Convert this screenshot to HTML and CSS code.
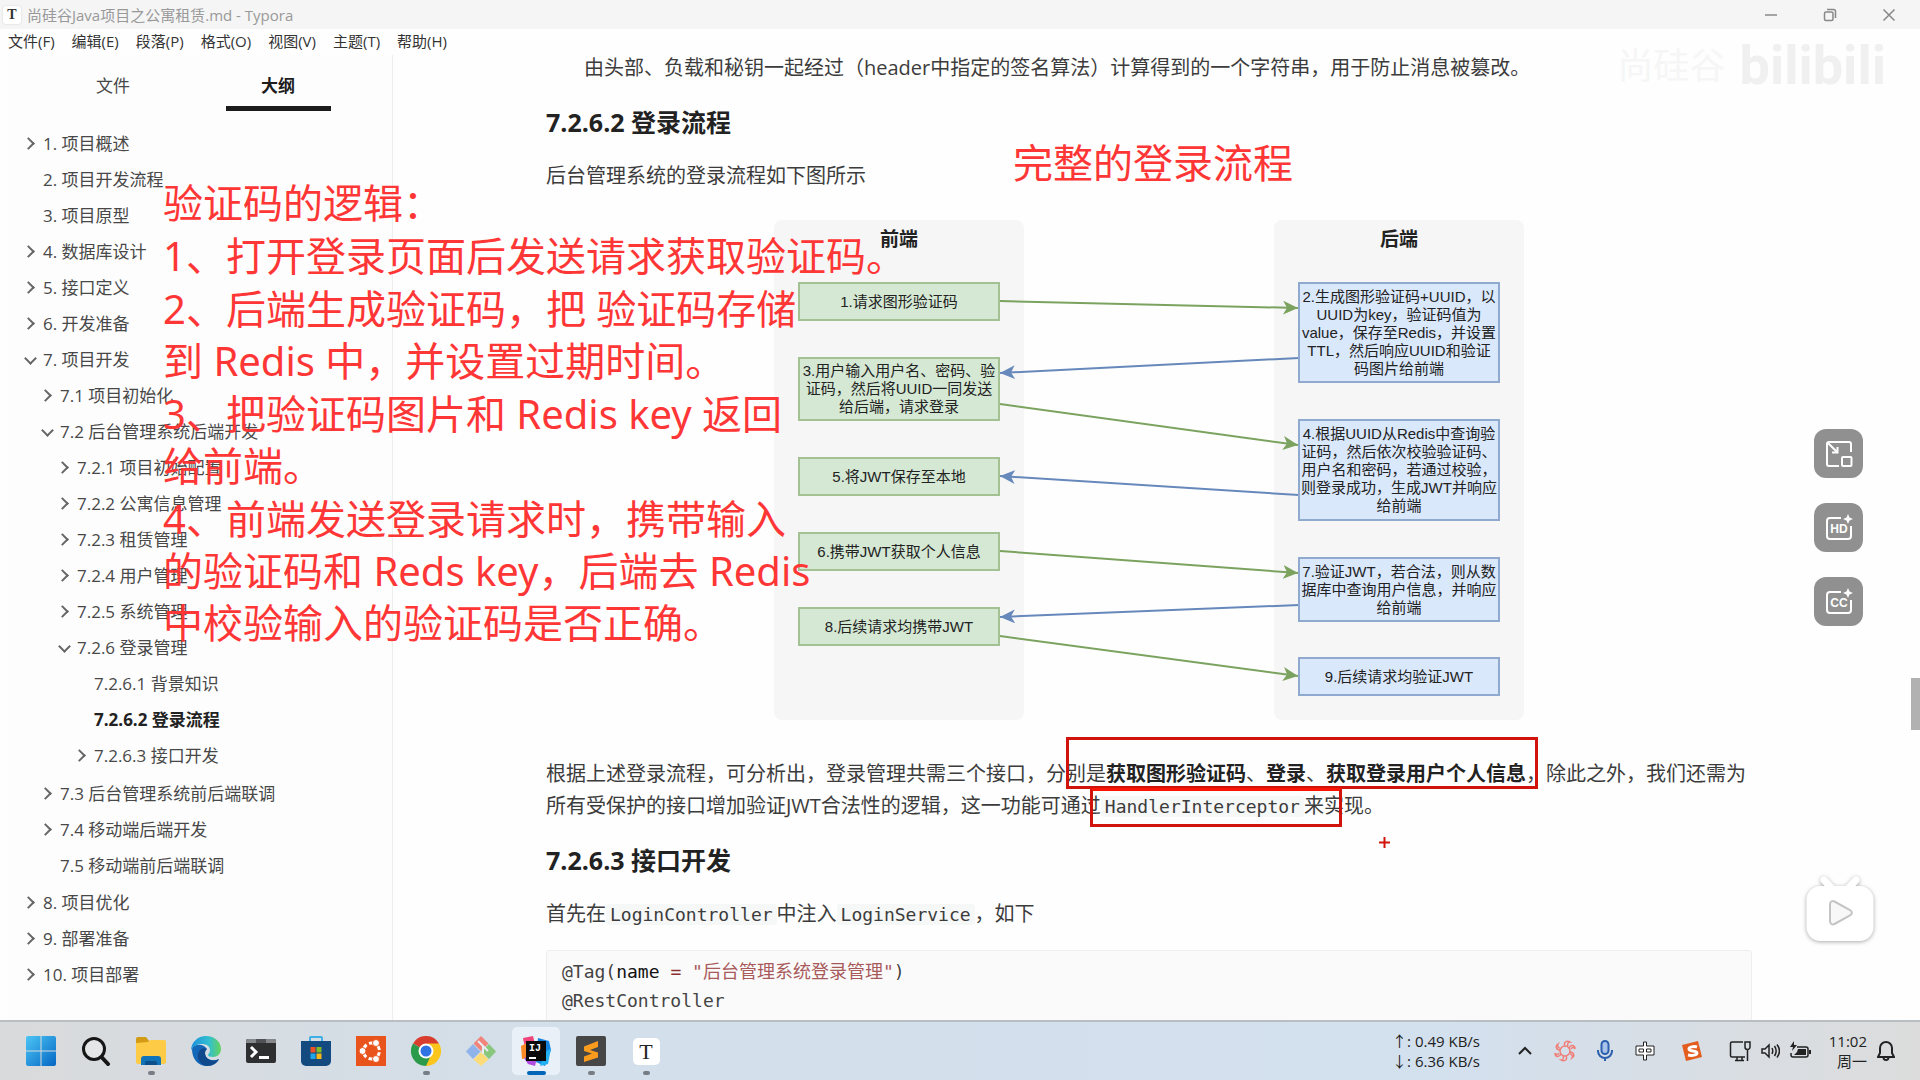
FILE: index.html
```html
<!DOCTYPE html>
<html lang="zh-CN">
<head>
    <meta charset="UTF-8">
    <meta name="viewport" content="width=device-width, initial-scale=1.0">
    <title>尚硅谷Java项目之公寓租赁.md - Typora</title>
    <link rel="stylesheet" href="styles.css">
</head>
<body>
    <header class="titlebar">
        <span class="app-icon">T</span>
        <span class="app-title">尚硅谷Java项目之公寓租赁.md - Typora</span>
        <div class="window-buttons">
            <button aria-label="最小化"><svg width="14" height="14" viewBox="0 0 14 14"><path d="M1 7h12"/></svg></button>
            <button aria-label="还原"><svg width="14" height="14" viewBox="0 0 14 14"><rect x="1.5" y="4" width="8.500" height="8.500" rx="1.500"/><path d="M4 1.500h6.500a2 2 0 0 1 2 2V10"/></svg></button>
            <button aria-label="关闭"><svg width="14" height="14" viewBox="0 0 14 14"><path d="M1.500 1.500l11 11M12.500 1.500l-11 11"/></svg></button>
        </div>
    </header>

    <nav class="menubar">
        <button>文件(F)</button>
        <button>编辑(E)</button>
        <button>段落(P)</button>
        <button>格式(O)</button>
        <button>视图(V)</button>
        <button>主题(T)</button>
        <button>帮助(H)</button>
    </nav>

    <div class="workspace">
        <aside class="sidebar">
            <div class="tabs">
                <button class="tab">文件</button>
                <button class="tab active">大纲</button>
            </div>
            <ul class="outline">
                <li><div class="row"><button class="toggle" aria-label="展开"></button><a href="#">1. 项目概述</a></div></li>
                <li><div class="row leaf"><a href="#">2. 项目开发流程</a></div></li>
                <li><div class="row leaf"><a href="#">3. 项目原型</a></div></li>
                <li><div class="row"><button class="toggle" aria-label="展开"></button><a href="#">4. 数据库设计</a></div></li>
                <li><div class="row"><button class="toggle" aria-label="展开"></button><a href="#">5. 接口定义</a></div></li>
                <li><div class="row"><button class="toggle" aria-label="展开"></button><a href="#">6. 开发准备</a></div></li>
                <li><div class="row"><button class="toggle open" aria-label="折叠"></button><a href="#">7. 项目开发</a></div>
                    <ul>
                        <li><div class="row"><button class="toggle" aria-label="展开"></button><a href="#">7.1 项目初始化</a></div></li>
                        <li><div class="row"><button class="toggle open" aria-label="折叠"></button><a href="#">7.2 后台管理系统后端开发</a></div>
                            <ul>
                                <li><div class="row"><button class="toggle" aria-label="展开"></button><a href="#">7.2.1 项目初始配置</a></div></li>
                                <li><div class="row"><button class="toggle" aria-label="展开"></button><a href="#">7.2.2 公寓信息管理</a></div></li>
                                <li><div class="row"><button class="toggle" aria-label="展开"></button><a href="#">7.2.3 租赁管理</a></div></li>
                                <li><div class="row"><button class="toggle" aria-label="展开"></button><a href="#">7.2.4 用户管理</a></div></li>
                                <li><div class="row"><button class="toggle" aria-label="展开"></button><a href="#">7.2.5 系统管理</a></div></li>
                                <li><div class="row"><button class="toggle open" aria-label="折叠"></button><a href="#">7.2.6 登录管理</a></div>
                                    <ul>
                                        <li><div class="row leaf"><a href="#">7.2.6.1 背景知识</a></div></li>
                                        <li><div class="row leaf current"><a href="#login-flow">7.2.6.2 登录流程</a></div></li>
                                        <li><div class="row"><button class="toggle" aria-label="展开"></button><a href="#api-dev">7.2.6.3 接口开发</a></div></li>
                                    </ul>
                                </li>
                            </ul>
                        </li>
                        <li><div class="row"><button class="toggle" aria-label="展开"></button><a href="#">7.3 后台管理系统前后端联调</a></div></li>
                        <li><div class="row"><button class="toggle" aria-label="展开"></button><a href="#">7.4 移动端后端开发</a></div></li>
                        <li><div class="row leaf"><a href="#">7.5 移动端前后端联调</a></div></li>
                    </ul>
                </li>
                <li><div class="row"><button class="toggle" aria-label="展开"></button><a href="#">8. 项目优化</a></div></li>
                <li><div class="row"><button class="toggle" aria-label="展开"></button><a href="#">9. 部署准备</a></div></li>
                <li><div class="row"><button class="toggle" aria-label="展开"></button><a href="#">10. 项目部署</a></div></li>
            </ul>
        </aside>

        <main class="editor">
            <article>
                <p class="indent">由头部、负载和秘钥一起经过（header中指定的签名算法）计算得到的一个字符串，用于防止消息被篡改。</p>
                <h4 id="login-flow">7.2.6.2 登录流程</h4>
                <p>后台管理系统的登录流程如下图所示</p>

                <figure class="flow">
                    <div class="lane lane-front">前端</div>
                    <div class="lane lane-back">后端</div>
                    <svg class="arrows" width="750" height="500" viewBox="0 0 750 500">
                        <defs>
                            <marker id="headGreen" markerUnits="userSpaceOnUse" markerWidth="15" markerHeight="14" refX="15" refY="7" orient="auto"><path d="M15 7L0 14L4 7L0 0z" fill="#7ba35f"/></marker>
                            <marker id="headBlue" markerUnits="userSpaceOnUse" markerWidth="15" markerHeight="14" refX="15" refY="7" orient="auto"><path d="M15 7L0 14L4 7L0 0z" fill="#6688bb"/></marker>
                        </defs>
                        <g class="to-back">
                            <path d="M226 81L524 88"/>
                            <path d="M226 184L524 225"/>
                            <path d="M226 331L524 353"/>
                            <path d="M226 416L524 456"/>
                        </g>
                        <g class="to-front">
                            <path d="M525 138L226 153"/>
                            <path d="M525 275L226 256"/>
                            <path d="M525 385L226 397"/>
                        </g>
                    </svg>
                    <div class="node front n1">1.请求图形验证码</div>
                    <div class="node back n2">2.生成图形验证码+UUID，以<br>UUID为key，验证码值为<br>value，保存至Redis，并设置<br>TTL，然后响应UUID和验证<br>码图片给前端</div>
                    <div class="node front n3">3.用户输入用户名、密码、验<br>证码，然后将UUID一同发送<br>给后端，请求登录</div>
                    <div class="node back n4">4.根据UUID从Redis中查询验<br>证码，然后依次校验验证码、<br>用户名和密码，若通过校验，<br>则登录成功，生成JWT并响应<br>给前端</div>
                    <div class="node front n5">5.将JWT保存至本地</div>
                    <div class="node front n6">6.携带JWT获取个人信息</div>
                    <div class="node back n7">7.验证JWT，若合法，则从数<br>据库中查询用户信息，并响应<br>给前端</div>
                    <div class="node front n8">8.后续请求均携带JWT</div>
                    <div class="node back n9">9.后续请求均验证JWT</div>
                </figure>

                <div class="marked">
                    <p>根据上述登录流程，可分析出，登录管理共需三个接口，分别是<strong>获取图形验证码</strong>、<strong>登录</strong>、<strong>获取登录用户个人信息</strong>，除此之外，我们还需为所有受保护的接口增加验证JWT合法性的逻辑，这一功能可通过<code>HandlerInterceptor</code>来实现。</p>
                    <span class="mark mark-apis"></span>
                    <span class="mark mark-interceptor"></span>
                    <svg class="cursor" width="11" height="11" viewBox="0 0 11 11"><path d="M5.500 0v11M0 5.500h11"/></svg>
                </div>

                <h4 id="api-dev">7.2.6.3 接口开发</h4>
                <p>首先在<code>LoginController</code>中注入<code>LoginService</code>，如下</p>
                <pre>@Tag(<span class="attr">name</span> <span class="op">=</span> <span class="str">"后台管理系统登录管理"</span>)
@RestController</pre>
            </article>
            <div class="scroll-thumb"></div>
        </main>
    </div>

    <!-- notes laid over the document -->
    <div class="note note-logic">
        <p>验证码的逻辑：</p>
        <p>1、打开登录页面后发送请求获取验证码。</p>
        <p>2、后端生成验证码，把 验证码存储<br>到 Redis 中，并设置过期时间。</p>
        <p>3、把验证码图片和 Redis key 返回<br>给前端。</p>
        <p>4、前端发送登录请求时，携带输入<br>的验证码和 Reds key，后端去 Redis<br>中校验输入的验证码是否正确。</p>
    </div>
    <div class="note note-flow">完整的登录流程</div>

    <div class="watermark"><span class="author">尚硅谷</span><span class="brand">bilibili</span></div>

    <!-- player buttons -->
    <div class="player-tools">
        <button class="tool" aria-label="小窗">
            <svg width="28" height="28" viewBox="0 0 28 28"><path d="M26 12V4a2 2 0 0 0-2-2H4a2 2 0 0 0-2 2v20a2 2 0 0 0 2 2h10"/><path d="M3 3l9 9M12.500 7v5.500H7"/><rect x="17" y="17" width="9.500" height="9" rx="1"/></svg>
        </button>
        <button class="tool" aria-label="HD">
            <svg width="28" height="28" viewBox="0 0 28 28"><path d="M16 4H5a3 3 0 0 0-3 3v15a3 3 0 0 0 3 3h18a3 3 0 0 0 3-3V12"/><path class="fill" d="M23 0l1.500 3.500L28 5l-3.500 1.500L23 10l-1.500-3.500L18 5l3.500-1.500z"/><text x="14" y="19">HD</text></svg>
        </button>
        <button class="tool" aria-label="CC">
            <svg width="28" height="28" viewBox="0 0 28 28"><path d="M16 4H5a3 3 0 0 0-3 3v15a3 3 0 0 0 3 3h18a3 3 0 0 0 3-3V12"/><path class="fill" d="M23 0l1.500 3.500L28 5l-3.500 1.500L23 10l-1.500-3.500L18 5l3.500-1.500z"/><text x="14" y="19">CC</text></svg>
        </button>
    </div>
    <button class="tv" aria-label="播放">
        <svg width="80" height="78" viewBox="0 0 80 78">
            <path class="body" d="M21.500 8.500a3.500 3.500 0 0 1 5 0l8 8.500h11l8-8.500a3.500 3.500 0 0 1 5 5l-3 3.500h4a14 14 0 0 1 14 14v27a14 14 0 0 1-14 14h-39a14 14 0 0 1-14-14V31a14 14 0 0 1 14-14h4l-3-3.500a3.500 3.500 0 0 1 0-5z"/>
            <path class="play" d="M30 35.500c0-3 2-4 4.500-3l15.500 8.500c2.500 1.500 2.500 4 0 5.500L34.500 55c-2.500 1-4.500 0-4.500-3z"/>
        </svg>
    </button>

    <footer class="taskbar">
        <div class="apps">
            <button aria-label="开始"><svg width="30" height="30" viewBox="0 0 30 30"><defs><linearGradient id="win" x2="1" y2="1"><stop stop-color="#4cc6f5"/><stop offset="1" stop-color="#0566c4"/></linearGradient></defs><path fill="url(#win)" d="M2 0h12.500v14.500H0V2a2 2 0 0 1 2-2zM15.500 0H28a2 2 0 0 1 2 2v12.500H15.500zM0 15.500h14.500V30H2a2 2 0 0 1-2-2zM15.500 15.500H30V28a2 2 0 0 1-2 2H15.500z"/></svg></button>
            <button aria-label="搜索"><svg width="30" height="30" viewBox="0 0 30 30"><circle cx="13" cy="13" r="10.500" fill="#e4e6e8" stroke="#161616" stroke-width="3"/><path d="M20.500 21l6.500 7" stroke="#161616" stroke-width="4" stroke-linecap="round"/></svg></button>
            <button class="running" aria-label="文件资源管理器"><svg width="32" height="30" viewBox="0 0 32 30"><path fill="#d39a13" d="M1 3a2 2 0 0 1 2-2h8l3 4v6H1z"/><path fill="#fdcb45" d="M1 7l12-1 2-2h14a2 2 0 0 1 2 2v20a2 2 0 0 1-2 2H3a2 2 0 0 1-2-2z"/><path fill="#1173b8" d="M6 29v-6a3 3 0 0 1 3-3h14a3 3 0 0 1 3 3v6z"/><path fill="#0b4f8b" d="M10 29v-2a2 2 0 0 1 2-2h8a2 2 0 0 1 2 2v2z"/></svg></button>
            <button aria-label="Edge"><svg width="30" height="30" viewBox="0 0 30 30"><defs><linearGradient id="edge" x2="1"><stop stop-color="#1b8fdc"/><stop offset=".6" stop-color="#33bfd0"/><stop offset="1" stop-color="#66d35c"/></linearGradient></defs><path fill="#1267b8" d="M1 13c0 10 6 17 15 17 6 0 10-3 12-7-7 3-14 0-14-6 0-3 2-4 2-4-3-5-13-6-15 0z"/><path fill="url(#edge)" d="M0 15C0 6 7 0 15 0c9 0 15 6 15 13 0 5-4 8-8 8-3 0-5-1-5-2s2-2 2-5c0-4-4-6-8-6-6 0-10 3-11 7z"/><path fill="#104a8c" d="M9 14c-5 6-1 15 7 16 6 0 10-3 12-7-7 4-14 0-14-6 0-3 2-4 2-4-3-1-5-1-7 1z"/></svg></button>
            <button aria-label="终端"><svg width="30" height="24" viewBox="0 0 30 24"><rect width="30" height="24" rx="2" fill="#2e2f31"/><path fill="#85888b" d="M2 0h26a2 2 0 0 1 2 2v2H0V2a2 2 0 0 1 2-2z"/><path fill="#505255" d="M10 0h10v4H10z"/><path d="M5 8l5 5-5 5" fill="none" stroke="#fff" stroke-width="3"/><path d="M13 18.500h10" stroke="#fff" stroke-width="3"/></svg></button>
            <button aria-label="应用商店"><svg width="30" height="30" viewBox="0 0 30 30"><path d="M9 6V2a1 1 0 0 1 1-1h10a1 1 0 0 1 1 1v4" fill="none" stroke="#3fb0e6" stroke-width="2"/><path fill="#134a80" d="M0 5h30v20a5 5 0 0 1-5 5H5a5 5 0 0 1-5-5z"/><path fill="#ef5027" d="M9.500 11h5v5.500h-5z"/><path fill="#83bb23" d="M15.500 11h5v5.500h-5z"/><path fill="#23a5ea" d="M9.500 17.500h5V23h-5z"/><path fill="#fbb919" d="M15.500 17.500h5V23h-5z"/></svg></button>
            <button aria-label="Ubuntu"><svg width="30" height="30" viewBox="0 0 30 30"><path fill="#e8541c" d="M0 0h30v30H0z"/><circle cx="15.500" cy="15" r="8" fill="none" stroke="#fff" stroke-width="3" stroke-dasharray="14 2.750" stroke-dashoffset="-1.400"/><g fill="#fff" stroke="#e8541c"><circle cx="6.500" cy="15" r="3.500"/><circle cx="20" cy="7" r="3.500"/><circle cx="20" cy="23" r="3.500"/></g></svg></button>
            <button class="running" aria-label="Chrome"><svg width="30" height="30" viewBox="0 0 30 30"><path fill="#d93d2e" d="M15 15L2 7.500a15 15 0 0 1 26 0z"/><path fill="#fbc61c" d="M15 15l2-7.500h11A15 15 0 0 1 15 30z"/><path fill="#2c9a4b" d="M15 15l5 4-5 11A15 15 0 0 1 2 7.500z"/><circle cx="15" cy="15" r="7.500" fill="#fff"/><circle cx="15" cy="15" r="5.500" fill="#2f72e4"/></svg></button>
            <button aria-label="Git"><svg width="30" height="30" viewBox="0 0 30 30"><path fill="#f0847a" d="M15 0l7.500 7.500L15 15 7.500 7.500z"/><path fill="#8fb3ea" d="M7 8l7.500 7.500L7 23l-7-7.500z"/><path fill="#88c77c" d="M23 8l7 7.500-7 7.500-7.500-7.500z"/><path fill="#fbdc78" d="M15 16l7.500 7.500L15 30l-7.500-6.500z"/><path d="M12 5l5 5v8M17 10l5 5" fill="none" stroke="#e6edf3" stroke-width="2"/></svg></button>
            <button class="running active" aria-label="IntelliJ IDEA"><svg width="32" height="32" viewBox="0 0 32 32"><path fill="#f0457a" d="M3 3l10-2 3 12-9 10z"/><path fill="#f98a26" d="M1 11l8-4 3 15-10 2z"/><path fill="#1683e0" d="M18 3l11 3 2 9-6 16-9-4z"/><path fill="#b14be0" d="M4 23l14-4-3 12-7-2z"/><path fill="#22b0f2" d="M24 18l7-5-3 16-8 2z"/><path fill="#0a0a0a" d="M6 6h20v20H6z"/><text x="9" y="16" class="ij">IJ</text><path fill="#fff" d="M9 22h7v2H9z"/></svg></button>
            <button class="running" aria-label="Sublime Text"><svg width="30" height="30" viewBox="0 0 30 30"><rect width="30" height="30" rx="2" fill="#464646"/><path fill="#fb9b1e" d="M8 10.500L22 5v6l-8 3 8 2.500v5L8 26v-5.500l8-3-8-2.500z"/></svg></button>
            <button class="running" aria-label="Typora"><span class="typora">T</span></button>
        </div>

        <div class="tray">
            <div class="network">↑: 0.49 KB/s<br>↓: 6.36 KB/s</div>
            <button class="slot" aria-label="显示隐藏的图标"><svg width="16" height="16" viewBox="0 0 16 16"><path d="M2 11l6-6 6 6"/></svg></button>
            <button class="slot" aria-label="云服务"><svg class="flower" width="22" height="22" viewBox="0 0 22 22"><path d="M11 6c-2-4 2-6 5-4-2 0-3 2-2 4"/><path d="M15 8c2-4 6-3 6 1-1-2-3-2-4 0"/><path d="M16 12c4 0 5 4 2 6 1-2 0-4-2-4"/><path d="M12 16c2 4-2 6-5 4 2 0 3-2 2-4"/><path d="M7 14c-2 4-6 3-6-1 1 2 3 2 4 0"/><path d="M6 10C2 10 1 6 4 4c-1 2 0 4 2 4"/><circle cx="11" cy="11" r="5"/></svg></button>
            <button class="slot" aria-label="麦克风"><svg class="mic" width="20" height="22" viewBox="0 0 20 22"><rect x="6.500" y="1" width="7" height="13" rx="3.500"/><path d="M3 10v1a7 7 0 0 0 14 0v-1M10 18v3"/></svg></button>
            <button class="slot ime" aria-label="输入法"><svg width="20" height="20" viewBox="0 0 20 20"><path d="M8.500 1h3v4H19v9h-7.500v5h-3v-5H1V5h7.500z"/><path d="M4 8h4.500v3H4zM11.500 8H16v3h-4.500z"/></svg></button>
            <button class="slot sogou" aria-label="搜狗输入法"><svg width="20" height="20" viewBox="0 0 20 20"><path fill="#e25d1e" stroke="none" d="M0 4L16 0l4 16L4 20z"/><path d="M15 6c-3-1-8 0-8 2 0 3 8 1 8 4 0 2-5 3-9 2" stroke="#fff" stroke-width="3"/></svg></button>
            <div class="quick">
                <svg width="22" height="22" viewBox="0 0 22 22"><path d="M14 2H3a1.500 1.500 0 0 0-1.500 1.500v12A1.500 1.500 0 0 0 3 17h13M6 20.500h9M8 17v3M13 17v3M18.500 9v12M16 2h5v5a2 2 0 0 1-5 0z"/></svg>
                <svg width="20" height="20" viewBox="0 0 20 20"><path d="M2 8v4h3l4 4V4L5 8zM12 7c1 2 1 4 0 6M14.500 5c2 3 2 7 0 10M17 3.500c3 4 3 9 0 13"/></svg>
                <svg width="22" height="20" viewBox="0 0 22 20"><path d="M8 6h9a2 2 0 0 1 2 2v6a2 2 0 0 1-2 2H4a2 2 0 0 1-2-2v-2"/><path class="solid" d="M9 8h8v6H5l3-3zM20 9h2v4h-2zM5 0L1 6h3l-1 4 5-6H5z"/></svg>
            </div>
            <div class="clock">11:02<br>周一</div>
            <button class="slot bell" aria-label="通知"><svg width="18" height="20" viewBox="0 0 18 20"><path d="M9 1a6 6 0 0 0-6 6v5l-2 4h16l-2-4V7a6 6 0 0 0-6-6zM6.500 16.500a2.500 2.500 0 0 0 5 0"/></svg></button>
        </div>
    </footer>
</body>
</html>
```

FILE: styles.css
```css
* {
    margin: 0;
    padding: 0;
    box-sizing: border-box;
}

body {
    display: flex;
    flex-direction: column;
    height: 100vh;
    overflow: hidden;
    position: relative;
    background: #fefefe;
    font-family: "Open Sans", "Noto Sans CJK SC", sans-serif;
    color: #3c3c3c;
}

button {
    border: none;
    background: none;
    font: inherit;
    color: inherit;
    cursor: pointer;
}

a {
    color: inherit;
    text-decoration: none;
}

svg {
    display: block;
}

/* title bar */
.titlebar {
    display: flex;
    align-items: center;
    flex: none;
    height: 29px;
    padding: 0 2px 0 3px;
    background: #f5f5f5;
    color: #999;
    font-size: 15px;
    line-height: 24px;
}

.app-icon {
    width: 18px;
    height: 18px;
    margin-right: 6px;
    border-radius: 3px;
    background: #fff;
    box-shadow: 0 0 2px #ccc;
    color: #333;
    font: bold 14px/18px "Liberation Serif", serif;
    text-align: center;
}

.window-buttons {
    display: flex;
    margin-left: auto;
}

.window-buttons button {
    display: flex;
    justify-content: center;
    align-items: center;
    width: 59px;
    height: 29px;
}

.window-buttons svg {
    fill: none;
    stroke: #888;
    stroke-width: 1.5;
}

/* menu */
.menubar {
    display: flex;
    flex: none;
    gap: 17px;
    height: 23px;
    padding: 0 8px;
    font-size: 15px;
    line-height: 24px;
    color: #333;
}

.workspace {
    display: flex;
    flex: 1;
    min-height: 0;
}

/* sidebar */
.sidebar {
    flex: none;
    width: 386px;
    margin: 3px 0 0 7px;
    background: #fdfdfd;
    border-right: 1px solid #eee;
    font-size: 17px;
    color: #484848;
}

.tabs {
    display: flex;
    justify-content: center;
    height: 56px;
    padding-right: 8px;
}

.tab {
    width: 105px;
    margin: 0 30px;
    padding-top: 8px;
    border-bottom: 5px solid transparent;
}

.tab.active {
    border-color: #1c1c1c;
    color: #1c1c1c;
    font-weight: bold;
}

.outline {
    padding: 13px 0 0 15px;
}

.outline ul {
    padding: 0 0 1px 17px;
}

.outline li {
    list-style: none;
}

.row {
    display: flex;
    align-items: center;
    gap: 5px;
    height: 36px;
    white-space: nowrap;
}

.row.leaf {
    padding-left: 21px;
}

.row.current {
    font-weight: bold;
    color: #222;
}

.toggle {
    display: flex;
    justify-content: center;
    align-items: center;
    width: 16px;
    height: 16px;
    padding: 3px 4px 0 0;
}

.toggle::before {
    content: "";
    flex: none;
    width: 7px;
    height: 7px;
    border-top: 2px solid #666;
    border-right: 2px solid #666;
    transform: rotate(45deg);
}

.toggle.open {
    padding: 0;
}

.toggle.open::before {
    transform: rotate(135deg);
}

/* document */
.editor {
    flex: 1;
    min-width: 0;
    position: relative;
    padding-right: 15px;
    overflow: hidden;
}

article {
    max-width: 1206px;
    margin: 0 auto;
    font-size: 20px;
    line-height: 32px;
}

article p {
    margin-bottom: 20px;
}

.indent {
    padding-left: 38px;
}

h4 {
    margin-bottom: 20px;
    font-size: 25px;
    line-height: 36px;
    color: #222;
}

strong {
    color: #222;
}

code,
pre {
    font-family: "DejaVu Sans Mono", "Noto Sans CJK SC", monospace;
    font-size: 18px;
}

code {
    padding: 0 4px;
    border-radius: 3px;
    background: #f6f7f7;
    line-height: 20px;
}

pre {
    height: 120px;
    padding: 6px 15px;
    border: 1px solid #eee;
    border-radius: 3px;
    background: #fafafa;
    line-height: 29px;
    color: #444;
}

.attr {
    color: #111;
}

.op {
    color: #8a3030;
}

.str {
    color: #a85a5a;
}

.scroll-thumb {
    position: absolute;
    right: 0;
    top: 626px;
    width: 9px;
    height: 52px;
    background: #b1b1b1;
}

/* login flow diagram */
.flow {
    position: relative;
    width: 750px;
    height: 500px;
    margin: 28px auto 38px;
    font-family: "Liberation Sans", "Noto Sans CJK SC", sans-serif;
    color: #222;
}

.lane {
    position: absolute;
    top: 0;
    width: 250px;
    height: 500px;
    padding-top: 4px;
    border-radius: 8px;
    background: #f6f6f6;
    font-size: 19px;
    font-weight: bold;
    text-align: center;
}

.lane-front {
    left: 0;
}

.lane-back {
    right: 0;
}

.arrows {
    position: absolute;
    left: 0;
    top: 0;
}

.arrows g {
    fill: none;
    stroke-width: 2;
}

.to-back {
    stroke: #7ba35f;
}

.to-front {
    stroke: #6688bb;
}

.to-back path {
    marker-end: url(#headGreen);
}

.to-front path {
    marker-end: url(#headBlue);
}

.arrows marker path {
    stroke: none;
}

.node {
    position: absolute;
    display: flex;
    justify-content: center;
    align-items: center;
    width: 202px;
    height: 39px;
    font-size: 15px;
    line-height: 18px;
    text-align: center;
    white-space: nowrap;
}

.front {
    left: 24px;
    border: 2px solid #a3c193;
    background: #d5e8d4;
}

.back {
    left: 524px;
    border: 2px solid #8fa9cf;
    background: #dae8fc;
}

.n1 { top: 62px; }
.n2 { top: 62px; height: 101px; }
.n3 { top: 137px; height: 64px; }
.n4 { top: 199px; height: 102px; }
.n5 { top: 237px; }
.n6 { top: 312px; }
.n7 { top: 337px; height: 65px; }
.n8 { top: 387px; }
.n9 { top: 437px; }

/* red marker boxes */
.marked {
    position: relative;
}

.mark {
    position: absolute;
    border: 3px solid #d0140c;
}

.mark-apis {
    left: 520px;
    top: -21px;
    width: 472px;
    height: 52px;
}

.mark-interceptor {
    left: 544px;
    top: 30px;
    width: 252px;
    height: 39px;
    border-top-color: #fb1505;
}

.cursor {
    position: absolute;
    left: 833px;
    top: 79px;
    stroke: #d0140c;
    stroke-width: 2;
}

/* notes */
.note {
    position: absolute;
    font-family: "Noto Sans", "Noto Sans CJK SC", sans-serif;
    font-size: 40px;
    line-height: 52px;
    color: #ff3636;
    white-space: nowrap;
}

.note p {
    margin-bottom: 1px;
}

.note-logic {
    left: 163px;
    top: 177px;
}

.note-flow {
    left: 1013px;
    top: 137px;
}

.watermark {
    position: absolute;
    right: 34px;
    top: 34px;
    display: flex;
    align-items: center;
    gap: 14px;
    line-height: 64px;
    color: #f0f0f0;
}

.author {
    font-size: 36px;
    color: #f6f6f6;
}

.brand {
    font-family: "Liberation Sans Narrow", Roboto, sans-serif;
    font-size: 54px;
    font-weight: bold;
}

/* player buttons */
.player-tools {
    position: absolute;
    right: 57px;
    top: 429px;
    display: flex;
    flex-direction: column;
    gap: 25px;
}

.tool {
    display: flex;
    justify-content: center;
    align-items: center;
    width: 49px;
    height: 49px;
    border-radius: 12px;
    background: #909090;
}

.tool svg {
    fill: none;
    stroke: #fff;
    stroke-width: 2;
}

.tool .fill {
    fill: #fff;
    stroke: none;
}

.tool text {
    fill: #fff;
    stroke: none;
    font: bold 12px "Liberation Sans", sans-serif;
    text-anchor: middle;
}

.tv {
    position: absolute;
    right: 40px;
    top: 869px;
}

.tv .body {
    fill: #fff;
    filter: drop-shadow(0 1px 2px #aaa);
}

.tv .play {
    fill: #f8f8f8;
    stroke: #c4c4c4;
    stroke-width: 2;
}

/* taskbar */
.taskbar {
    display: flex;
    justify-content: space-between;
    align-items: center;
    flex: none;
    position: relative;
    height: 60px;
    padding: 0 15px 0 17px;
    border-top: 2px solid #b9bec3;
    background: linear-gradient(90deg, #d9dadb, #d3dfea 28%, #d3e0ee 75%, #dcdcdc);
}

.apps {
    display: flex;
    gap: 7px;
}

.apps button {
    display: flex;
    justify-content: center;
    align-items: center;
    position: relative;
    width: 48px;
    height: 48px;
    border-radius: 5px;
}

.apps .active {
    background: #e9f0f7;
}

.running::after {
    content: "";
    position: absolute;
    bottom: 0;
    width: 7px;
    height: 4px;
    border-radius: 2px;
    background: #767d84;
}

.active.running::after {
    width: 19px;
    background: #0067b8;
}

.ij {
    fill: #fff;
    font: bold 10px "Liberation Mono", monospace;
}

.typora {
    width: 27px;
    height: 27px;
    border-radius: 5px;
    background: #fff;
    color: #222;
    font: 22px/27px "Liberation Serif", serif;
}

.tray {
    display: flex;
    align-items: center;
    font-size: 15px;
    line-height: 20px;
    color: #222;
}

.tray svg {
    fill: none;
    stroke: #222;
    stroke-width: 2;
}

.network {
    margin-right: 25px;
}

.slot {
    display: flex;
    justify-content: center;
    align-items: center;
    width: 40px;
    height: 48px;
}

.tray .flower {
    stroke: #ef7f78;
    stroke-width: 1.5;
}

.tray .mic {
    stroke: #2b5fae;
}

.tray .mic rect {
    fill: #a9c4ea;
}

.tray .ime svg {
    fill: #fff;
    stroke-width: 1;
}

.sogou {
    width: 54px;
}

.quick {
    display: flex;
    align-items: center;
    gap: 9px;
    margin: 0 6px 0 10px;
}

.tray .quick svg {
    stroke-width: 1.5;
}

.quick .solid {
    fill: #222;
    stroke: none;
}

.clock {
    width: 50px;
    text-align: right;
}

.bell {
    width: 38px;
}
```
